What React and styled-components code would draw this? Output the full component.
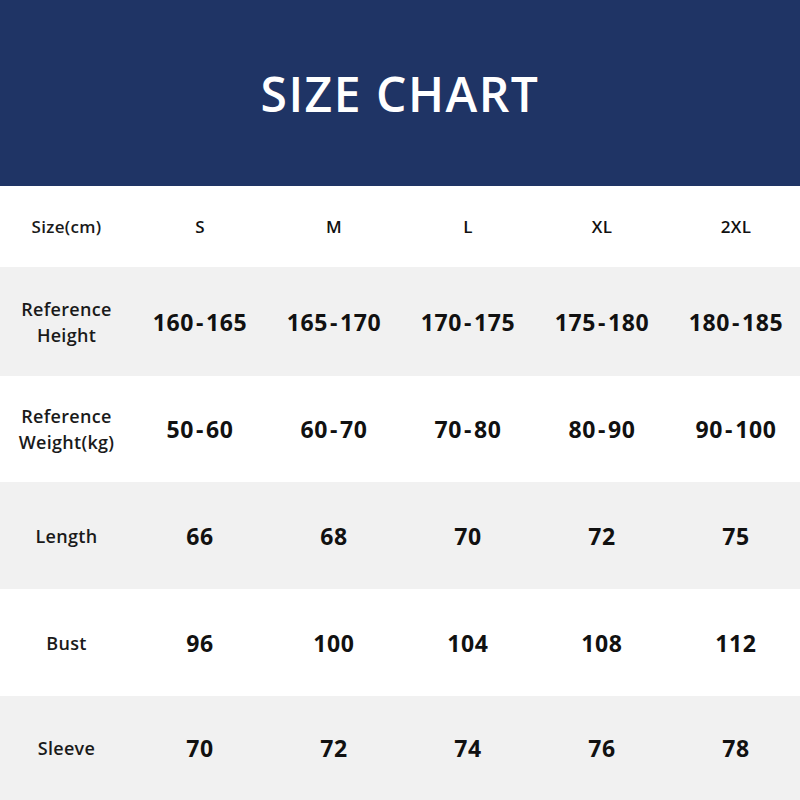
import React from "react"
import styled, { createGlobalStyle } from "styled-components"

const GlobalStyle = createGlobalStyle`
    html, body {
        margin: 0;
        padding: 0;
        background: #ffffff;
    }
    body {
        font-family: 'Open Sans', 'Noto Sans', sans-serif;
        color: #111;
    }
`

const Page = styled.div`
    width: 800px;
    height: 800px;
    display: flex;
    flex-direction: column;
    overflow: hidden;
`

const Banner = styled.div`
    height: 186px;
    background: #1f3465;
    display: flex;
    align-items: center;
    justify-content: center;
`

const Title = styled.h1`
    margin: 0;
    margin-top: 0;
    color: #ffffff;
    font-family: 'Open Sans', sans-serif;
    font-size: 48px;
    font-weight: 600;
    letter-spacing: 1.5px;
`

const Row = styled.div`
    height: ${p => p.h}px;
    display: grid;
    grid-template-columns: 133px repeat(5, 134px);
    align-items: center;
    background: ${p => (p.shade ? "#f1f1f1" : "#ffffff")};
`

const Label = styled.div`
    text-align: center;
    font-size: ${p => (p.small ? 17 : 18)}px;
    font-weight: 600;
    line-height: 26px;
    letter-spacing: 0.3px;
    color: #1a1a1a;
`

const Cell = styled.div`
    text-align: center;
    font-size: ${p => (p.small ? 17 : 23)}px;
    font-weight: ${p => (p.small ? 600 : 700)};
    letter-spacing: ${p => (p.small ? 0.3 : 0.6)}px;
    color: #111;
`

const Dash = styled.span`
    margin: 0 2px;
`

const renderValue = v => {
    const parts = v.split("-")
    if (parts.length < 2) return v
    return (
        <>
            {parts[0]}<Dash>-</Dash>{parts[1]}
        </>
    )
}

const rows = [
    { label: ["Size(cm)"], values: ["S", "M", "L", "XL", "2XL"], h: 81, small: true },
    { label: ["Reference", "Height"], values: ["160-165", "165-170", "170-175", "175-180", "180-185"], h: 109 },
    { label: ["Reference", "Weight(kg)"], values: ["50-60", "60-70", "70-80", "80-90", "90-100"], h: 106 },
    { label: ["Length"], values: ["66", "68", "70", "72", "75"], h: 107 },
    { label: ["Bust"], values: ["96", "100", "104", "108", "112"], h: 107 },
    { label: ["Sleeve"], values: ["70", "72", "74", "76", "78"], h: 104 },
]

export default function App() {
    return (
        <Page>
            <GlobalStyle />
            <Banner>
                <Title>SIZE CHART</Title>
            </Banner>
            {rows.map((r, i) => (
                <Row key={i} h={r.h} shade={i % 2 === 1}>
                    <Label small={r.small}>
                        {r.label.map(l => <div key={l}>{l}</div>)}
                    </Label>
                    {r.values.map((v, j) => (
                        <Cell key={j} small={r.small}>{renderValue(v)}</Cell>
                    ))}
                </Row>
            ))}
        </Page>
    )
}
